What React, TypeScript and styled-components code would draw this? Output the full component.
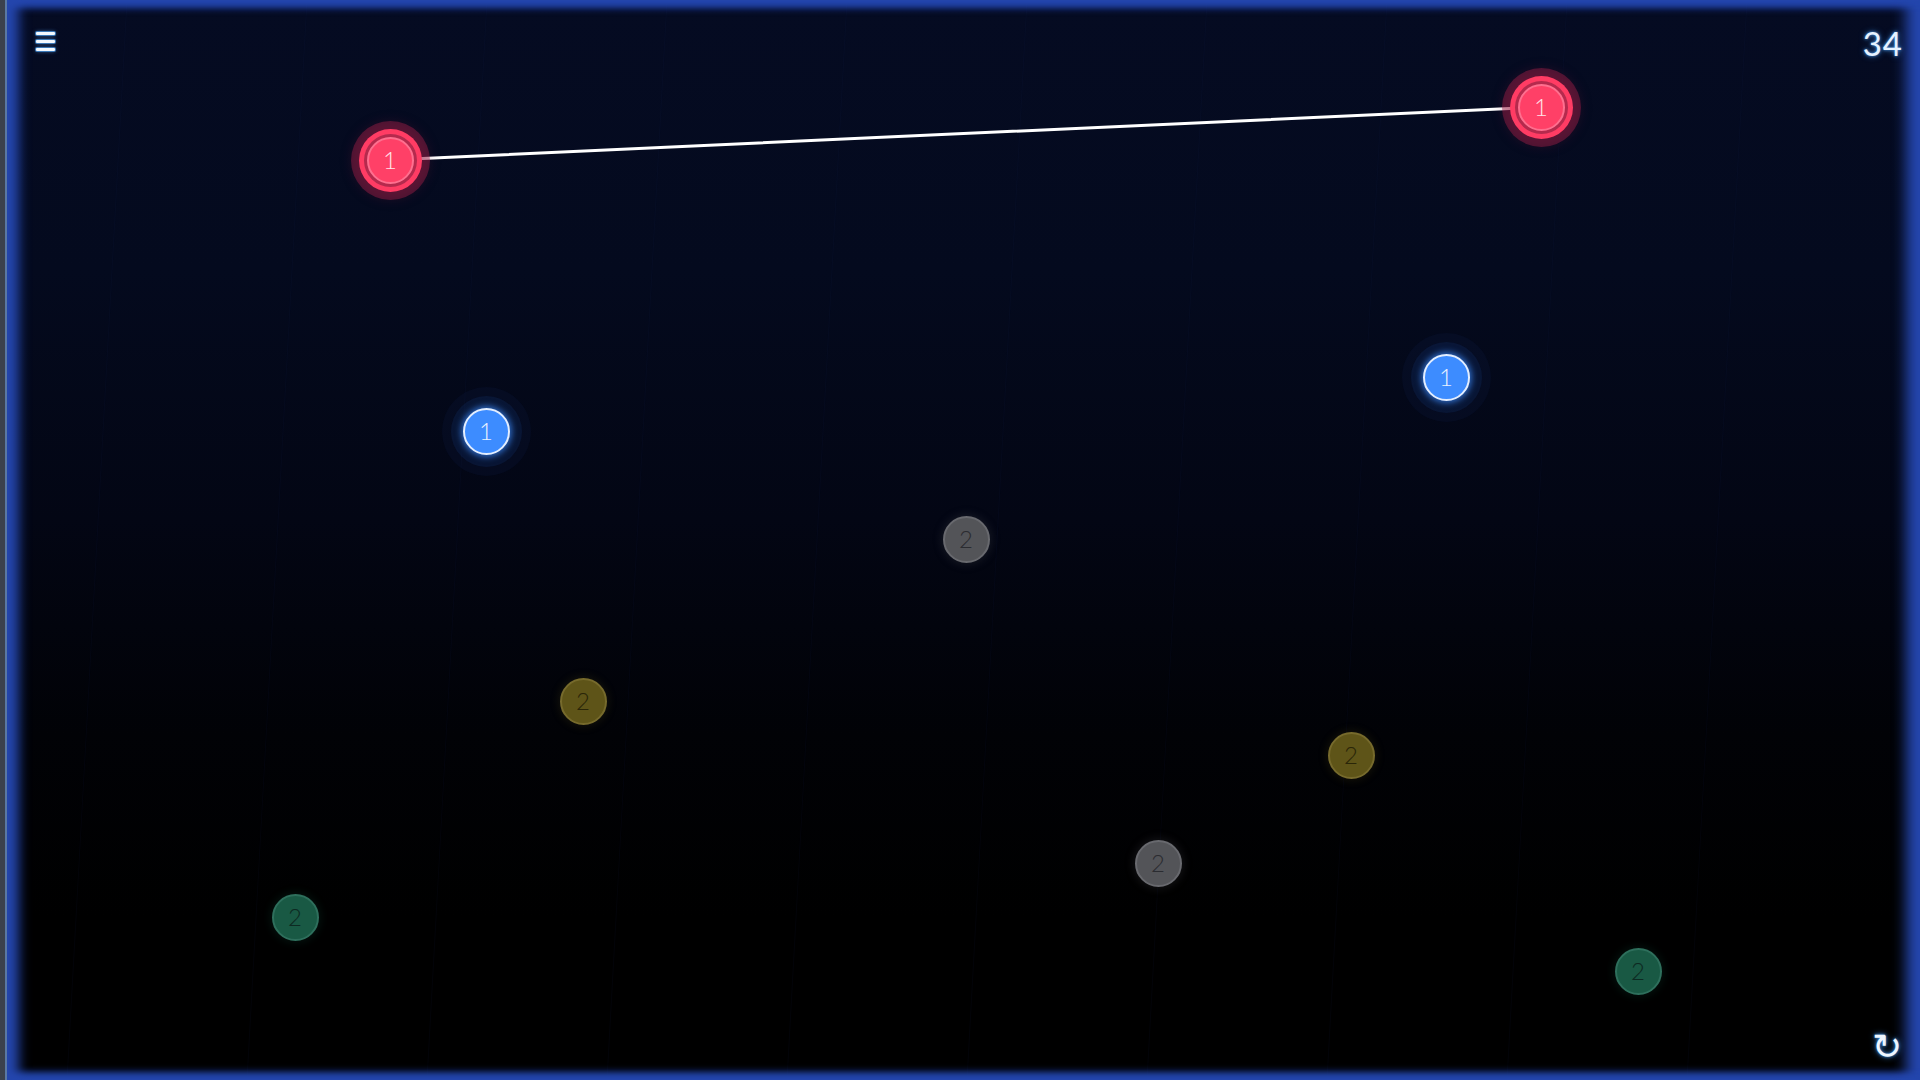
import React from "react";
import styled, { createGlobalStyle, css } from "styled-components";

const GlobalStyle = createGlobalStyle`
  html, body { margin: 0; padding: 0; width: 100%; height: 100%; overflow: hidden; background: #000; }
  #root { width: 100%; height: 100%; }
  * { box-sizing: border-box; }
`;

const Page = styled.div`
  display: flex;
  width: 1920px;
  height: 1080px;
  background: #3b414d;
  font-family: Lato, "Open Sans", "Liberation Sans", sans-serif;
`;

const Gutter = styled.div`
  width: 7px;
  flex: none;
  background: #3b414d;
  border-right: 2px solid #5a78a4;
`;

const Board = styled.div`
  position: relative;
  flex: 1;
  overflow: hidden;
  background: linear-gradient(180deg, #050b22 0%, #040a1e 25%, #030614 48%, #010206 68%, #000000 85%, #000000 100%);
  &::after {
    content: "";
    position: absolute;
    inset: 0;
    pointer-events: none;
    box-shadow:
      inset 14px 0 12px -2px #2446ad,
      inset -18px 0 14px -4px #2446ad,
      inset 0 10px 7px -2px #2446ad,
      inset 0 -10px 7px -2px #2446ad;
  }
`;

const Grid = styled.svg`
  position: absolute;
  inset: 0;
  width: 100%;
  height: 100%;
  pointer-events: none;
`;

const Wires = styled.svg`
  position: absolute;
  inset: 0;
  width: 100%;
  height: 100%;
  pointer-events: none;
`;

const TopBar = styled.div`
  position: absolute;
  top: 0;
  left: 0;
  right: 0;
  display: flex;
  justify-content: space-between;
  align-items: flex-start;
  padding: 22px 17px 0 29px;
  z-index: 3;
`;

const MenuButton = styled.button`
  display: flex;
  flex-direction: column;
  gap: 5px;
  margin-top: 10px;
  padding: 0;
  background: none;
  border: none;
  cursor: pointer;
`;

const MenuBar = styled.span`
  display: block;
  width: 19px;
  height: 3px;
  border-radius: 1px;
  background: #f2f8ff;
  box-shadow: 0 0 0 1px #3a78b8, 0 0 4px rgba(80, 150, 230, 0.8);
`;

const Score = styled.div`
  font-family: Lato, "Liberation Sans", sans-serif;
  font-weight: 400;
  font-size: 33px;
  line-height: 1;
  letter-spacing: 1px;
  color: #e6f2ff;
  text-shadow: 0 0 3px #4a9ae8, 0 0 6px rgba(60, 140, 230, 0.7);
  margin-top: 5px;
`;

const ResetButton = styled.button`
  position: absolute;
  right: 18px;
  bottom: 15px;
  z-index: 3;
  padding: 0;
  background: none;
  border: none;
  cursor: pointer;
  font-family: "DejaVu Sans", sans-serif;
  font-size: 36px;
  font-weight: normal;
  line-height: 1;
  color: #eef6ff;
  text-shadow: 0 0 3px #3f92e6, 0 0 6px rgba(60, 140, 230, 0.8);
`;

type Kind = "red" | "blue" | "grey" | "yellow" | "green";

const kindStyles: Record<Kind, ReturnType<typeof css>> = {
  red: css`
    background: #ff4067;
    color: #ffe3ea;
    border: 2px solid #ff6f8f;
    box-shadow:
      0 0 0 3px #b52a4d,
      0 0 0 8px #ff3c64,
      0 0 0 16px rgba(160, 30, 70, 0.45),
      0 0 14px 13px rgba(120, 20, 55, 0.35);
  `,
  blue: css`
    background: #3d8cff;
    color: #e8f1ff;
    border: 2px solid #e3eeff;
    box-shadow:
      0 0 6px 2px rgba(60, 140, 255, 0.7),
      0 0 0 12px rgba(20, 50, 110, 0.25),
      0 0 0 21px rgba(15, 35, 80, 0.18);
  `,
  grey: css`
    background: #535458;
    color: #2b2c31;
    border: 2px solid #68696e;
    box-shadow: 0 0 8px 2px rgba(70, 70, 80, 0.25);
  `,
  yellow: css`
    background: #5e5418;
    color: #2a2608;
    border: 2px solid #766a2c;
    box-shadow: 0 0 8px 2px rgba(90, 80, 20, 0.2);
  `,
  green: css`
    background: #195944;
    color: #0d2a22;
    border: 2px solid #2e6f5c;
    box-shadow: 0 0 8px 2px rgba(20, 90, 70, 0.2);
  `,
};

const Node = styled.div<{ $kind: Kind }>`
  position: absolute;
  z-index: 2;
  width: 47px;
  height: 47px;
  margin: -23.5px 0 0 -23.5px;
  border-radius: 50%;
  display: flex;
  align-items: center;
  justify-content: center;
  font-family: Lato, "Liberation Sans", sans-serif;
  font-weight: 300;
  font-size: 24px;
  line-height: 1;
  ${(p) => kindStyles[p.$kind]}
`;

type NodeData = { x: number; y: number; kind: Kind; value: number };

const OFFSET_X = 7;

const nodes: NodeData[] = [
  { x: 390, y: 160, kind: "red", value: 1 },
  { x: 1541, y: 107, kind: "red", value: 1 },
  { x: 486, y: 431, kind: "blue", value: 1 },
  { x: 1446, y: 377, kind: "blue", value: 1 },
  { x: 966, y: 539, kind: "grey", value: 2 },
  { x: 1158, y: 863, kind: "grey", value: 2 },
  { x: 583, y: 701, kind: "yellow", value: 2 },
  { x: 1351, y: 755, kind: "yellow", value: 2 },
  { x: 295, y: 917, kind: "green", value: 2 },
  { x: 1638, y: 971, kind: "green", value: 2 },
];

const gridXs = [120, 300, 480, 660, 840, 1020, 1200, 1380, 1560, 1740];

export default function App() {
  return (
    <>
      <GlobalStyle />
      <Page>
        <Gutter />
        <Board>
          <Grid viewBox="0 0 1913 1080" preserveAspectRatio="none">
            {gridXs.map((x, i) => (
              <line
                key={i}
                x1={x}
                y1={0}
                x2={x - 60}
                y2={1080}
                stroke="#1a2a5a"
                strokeOpacity={0.1}
                strokeWidth={1}
              />
            ))}
          </Grid>
          <Wires viewBox="0 0 1913 1080">
            <line
              x1={390 - OFFSET_X}
              y1={160}
              x2={1541 - OFFSET_X}
              y2={107}
              stroke="#ffffff"
              strokeWidth={3}
              strokeLinecap="round"
            />
          </Wires>
          <TopBar>
            <MenuButton aria-label="menu">
              <MenuBar />
              <MenuBar />
              <MenuBar />
            </MenuButton>
            <Score>34</Score>
          </TopBar>
          {nodes.map((n, i) => (
            <Node key={i} $kind={n.kind} style={{ left: n.x - OFFSET_X, top: n.y }}>
              {n.value}
            </Node>
          ))}
          <ResetButton aria-label="restart">↻</ResetButton>
        </Board>
      </Page>
    </>
  );
}
